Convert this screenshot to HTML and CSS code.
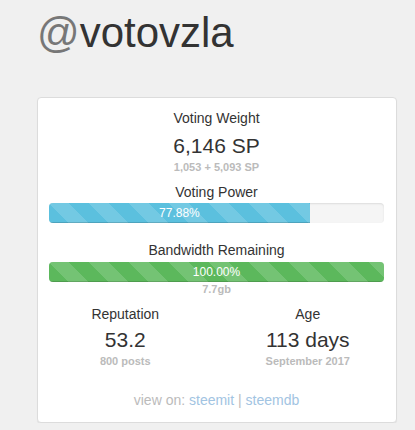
FILE: index.html
```html
<!DOCTYPE html>
<html>
<head>
<meta charset="utf-8">
<link rel="stylesheet" href="styles.css">
</head>
<body>
<div class="page">
  <h1 class="title"><span class="at">@</span>votovzla</h1>
  <div class="card">
    <div class="label">Voting Weight</div>
    <div class="big">6,146 SP</div>
    <div class="small">1,053 + 5,093 SP</div>
    <div class="label label-vp">Voting Power</div>
    <div class="progress progress-vp"><div class="bar bar-blue" style="width:77.88%">77.88%</div></div>
    <div class="label label-bw">Bandwidth Remaining</div>
    <div class="progress progress-bw"><div class="bar bar-green" style="width:100%">100.00%</div></div>
    <div class="small">7.7gb</div>
    <div class="stats">
      <div class="col">
        <div class="label">Reputation</div>
        <div class="big big-stat">53.2</div>
        <div class="small">800 posts</div>
      </div>
      <div class="col">
        <div class="label">Age</div>
        <div class="big big-stat">113 days</div>
        <div class="small">September 2017</div>
      </div>
    </div>
    <div class="footer">view on: <a href="#">steemit</a> | <a href="#">steemdb</a></div>
  </div>
</div>
</body>
</html>
```

FILE: styles.css
```css
html, body {
  margin: 0;
  padding: 0;
  background: #f0f0f0;
  font-family: "Liberation Sans", Arial, sans-serif;
  color: #333;
  font-size: 14px;
}

.page {
  padding: 10px 18px 0 37px;
}

.title {
  margin: 0;
  font-size: 42px;
  line-height: 46px;
  font-weight: normal;
  color: #333;
}

.at {
  color: #777;
}

.card {
  margin-top: 41px;
  width: 335px;
  background: #fff;
  border: 1px solid #dcdcdc;
  border-radius: 4px;
  box-shadow: 0 1px 1px rgba(0, 0, 0, 0.06);
  padding: 10px 12px 12px 11px;
  text-align: center;
}

.label {
  font-size: 14px;
  line-height: 20px;
}

.big {
  font-size: 21px;
  line-height: 24px;
  margin-top: 6px;
}

.small {
  font-size: 11px;
  line-height: 14px;
  font-weight: bold;
  color: #bbb;
  margin-top: 2px;
}

.label-vp {
  margin-top: 8px;
}

.label-bw {
  margin-top: 17px;
}

.progress {
  height: 20px;
  background: #f5f5f5;
  border-radius: 4px;
  box-shadow: inset 0 1px 2px rgba(0, 0, 0, 0.1);
  overflow: hidden;
}

.progress-vp {
  margin-top: 1px;
}

.progress-bw {
  margin-top: 2px;
}

.progress + .small {
  margin-top: 0;
}

.bar {
  height: 20px;
  line-height: 20px;
  font-size: 12px;
  color: #fff;
  text-align: center;
  box-shadow: inset 0 -1px 0 rgba(0, 0, 0, 0.15);
  background-image: linear-gradient(45deg, rgba(255, 255, 255, 0.15) 25%, transparent 25%, transparent 50%, rgba(255, 255, 255, 0.15) 50%, rgba(255, 255, 255, 0.15) 75%, transparent 75%, transparent);
  background-size: 40px 40px;
}

.bar-blue {
  background-color: #5bc0de;
}

.bar-green {
  background-color: #5cb85c;
}

.stats {
  display: grid;
  grid-template-columns: 1fr 1fr;
  margin: 8px -15px 0;
}

.col {
  padding: 0 15px;
}

.big-stat {
  margin-top: 4px;
}

.footer {
  margin-top: 22px;
  font-size: 14px;
  line-height: 20px;
  color: #bbb;
}

.footer a {
  color: #a2c4e2;
  text-decoration: none;
}
```
